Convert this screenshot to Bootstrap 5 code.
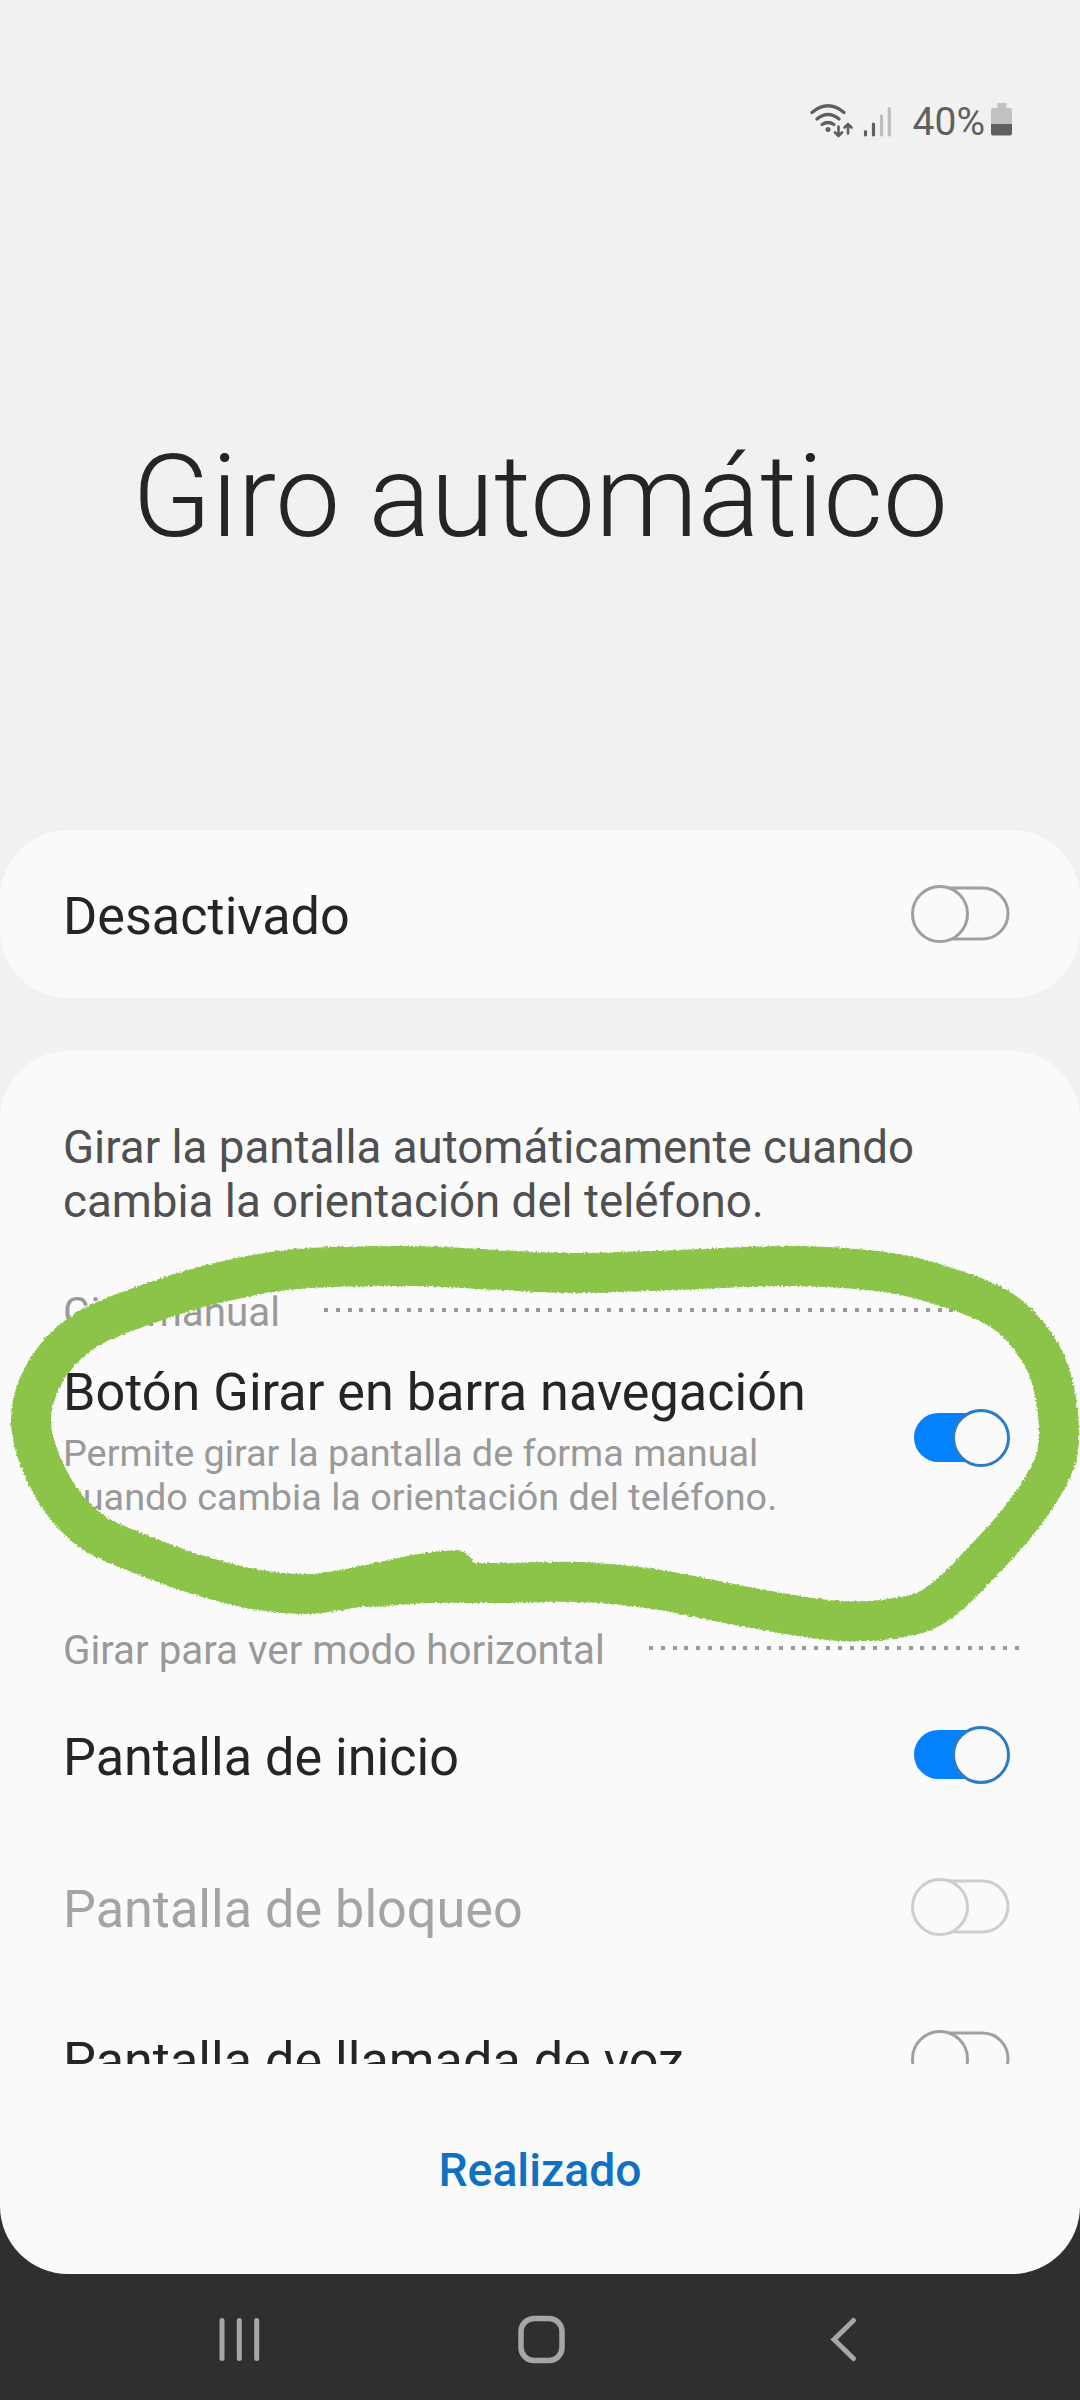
<!DOCTYPE html>
<html lang="es">
<head>
<meta charset="utf-8">
<meta name="viewport" content="width=device-width, initial-scale=1">
<title>Giro automático</title>
<link href="https://cdn.jsdelivr.net/npm/bootstrap@5.3.0/dist/css/bootstrap.min.css" rel="stylesheet">
<style>
  body { font-family: Roboto, "Noto Sans", sans-serif; background: #2f2f2f; color: #252525; }
  .phone { width: 1080px; height: 2400px; }
  .screen { height: 2274px; background: linear-gradient(#f1f1f1 0 1500px, #2f2f2f 1500px); }
  .dark-base { background: #2f2f2f; }
  .hero { height: 830px; }
  .status { height: 150px; padding: 90px 67px 0 0; color: #5f5f5f; }
  .pct { font-size: 39px; line-height: 60px; padding-top: 2px; margin-left: 13px; margin-right: 6px; }
  .hero-title { font-size: 115.8px; font-weight: 300; line-height: 140px; margin-top: 277px; }
  .panel { background: #fafafa; border-radius: 68px; }
  .panel-top { height: 168px; margin-bottom: 53px; }
  .panel-main { height: 1223px; }
  .side { padding-left: 63px; padding-right: 70px; }
  .scroller { height: 1013px; padding-top: 70px; }
  .intro { font-size: 45.7px; line-height: 54px; color: #505050; margin-bottom: 50px; }
  .sect { height: 62px; font-size: 40.3px; color: #999; padding-right: 60px; }
  .sect span { line-height: 46px; padding-top: 5px; }
  .dots { height: 4px; margin-left: 44px; background: repeating-linear-gradient(90deg, #999 0 4px, transparent 4px 11.8px); }
  .opt { height: 152px; }
  .opt-tall { height: 194px; margin-bottom: 82px; }
  .opt-name { font-size: 52.2px; line-height: 60px; padding-top: 6px; }
  .opt-tall .opt-name { padding-top: 6px; }
  .opt-note { font-size: 37.8px; line-height: 44px; color: #999; margin-top: 8px; }
  .off-text { color: #a4a4a4; }
  .foot { height: 210px; }
  .done { font-size: 46.3px; line-height: 60px; font-weight: 500; color: #0f71c0; margin-top: 1px; }
  .done:hover { color: #0f71c0; }
  .navkeys { height: 126px; }
  .ring { left: 0; top: 1230px; pointer-events: none; }
  svg { display: block; flex: none; }
</style>
<script src="https://cdn.jsdelivr.net/npm/bootstrap@5.3.0/dist/js/bootstrap.bundle.min.js"></script>
</head>
<body>
<svg width="0" height="0" class="position-absolute" aria-hidden="true">
  <symbol id="sw-off" viewBox="0 0 100 60">
    <path d="M30 4H72.500A25.500 25.500 0 0 1 72.500 55H30" fill="none" stroke="currentColor" stroke-width="3"/>
    <circle cx="30" cy="30" r="27.500" fill="#fafafa" stroke="currentColor" stroke-width="3"/>
  </symbol>
  <symbol id="sw-on" viewBox="0 0 100 60">
    <rect x="4" y="5" width="90" height="49" rx="24.500" fill="#0381fe"/>
    <circle cx="71" cy="30" r="27.500" fill="#fafafa" stroke="#2a7cc4" stroke-width="3"/>
  </symbol>
</svg>
<div class="phone position-relative overflow-hidden">
  <main class="dark-base">
    <div class="screen d-flex flex-column">
      <header class="hero">
        <div class="status d-flex justify-content-end align-items-start">
          <svg width="90" height="60" viewBox="0 0 90 60" fill="none" stroke="#5f5f5f" stroke-linecap="round">
            <path d="M2 22.500Q18 9 34 22.500M7 29Q18 20 29 29" stroke-width="3.200"/>
            <path d="M12 34.500Q18 30.500 24 34.500" stroke-width="3.200"/>
            <circle cx="18" cy="39.500" r="2.500" fill="#5f5f5f" stroke="none"/>
            <path d="M28.500 36.500V46M25 42.500L28.500 46L32 42.500M38 43.500V34M34.500 37.500L38 34L41.500 37.500" stroke-width="2.600"/>
            <path d="M55.500 41.500V45M63.500 34V45" stroke-width="3.200"/>
            <path d="M71.500 26V45M79.300 18.500V45" stroke="#bdbdbd" stroke-width="3.200"/>
          </svg>
          <span class="pct">40%</span>
          <svg width="22" height="60" viewBox="0 0 22 60">
            <path d="M6.500 13h9v5H19q2 0 2 2v14H0V20q0-2 2-2h4.500z" fill="#c1c1c1"/>
            <path d="M0 34h21v9.500q0 2-2 2H2q-2 0-2-2z" fill="#5f5f5f"/>
          </svg>
        </div>
        <h1 class="hero-title text-center mb-0">Giro automático</h1>
      </header>

      <section class="panel panel-top side d-flex justify-content-between align-items-center">
        <span class="opt-name">Desactivado</span>
        <svg width="100" height="60" color="#a0a0a0"><use href="#sw-off"/></svg>
      </section>

      <section class="panel panel-main">
        <div class="scroller overflow-hidden">
          <p class="intro side">Girar la pantalla automáticamente cuando<br>cambia la orientación del teléfono.</p>
          <div class="sect side d-flex align-items-center"><span>Giro manual</span><div class="dots flex-grow-1"></div></div>
          <div class="opt-tall side d-flex justify-content-between align-items-center">
            <div>
              <div class="opt-name">Botón Girar en barra navegación</div>
              <div class="opt-note">Permite girar la pantalla de forma manual<br>cuando cambia la orientación del teléfono.</div>
            </div>
            <svg width="100" height="60"><use href="#sw-on"/></svg>
          </div>
          <div class="sect side d-flex align-items-center"><span>Girar para ver modo horizontal</span><div class="dots flex-grow-1"></div></div>
          <div class="opt side d-flex justify-content-between align-items-center">
            <span class="opt-name">Pantalla de inicio</span>
            <svg width="100" height="60"><use href="#sw-on"/></svg>
          </div>
          <div class="opt side d-flex justify-content-between align-items-center">
            <span class="opt-name off-text">Pantalla de bloqueo</span>
            <svg width="100" height="60" color="#cdcdcd"><use href="#sw-off"/></svg>
          </div>
          <div class="opt side d-flex justify-content-between align-items-center">
            <span class="opt-name">Pantalla de llamada de voz</span>
            <svg width="100" height="60" color="#a0a0a0"><use href="#sw-off"/></svg>
          </div>
        </div>
        <div class="foot d-flex justify-content-center align-items-center">
          <button class="btn border-0 p-0 done" type="button">Realizado</button>
        </div>
      </section>
    </div>
  </main>

  <nav class="navkeys dark-base">
    <svg width="1080" height="126" viewBox="0 0 1080 126" fill="none" stroke="#a6a6a6" stroke-linecap="round">
      <path d="M222 46.500V84.500M239.300 46.500V84.500M256.700 46.500V84.500" stroke-width="5"/>
      <rect x="521" y="44.500" width="41" height="42" rx="13" stroke-width="5.500"/>
      <path d="M853.500 46.500L834 65.500L853.500 84.500" stroke-width="5"/>
    </svg>
  </nav>

  <!-- hand-drawn marker ring -->
  <svg class="ring position-absolute" width="1080" height="420" viewBox="0 1230 1080 420">
    <filter id="chalk" filterUnits="userSpaceOnUse" x="0" y="1230" width="1080" height="420">
      <feTurbulence type="fractalNoise" baseFrequency="0.5" numOctaves="2" seed="4"/>
      <feDisplacementMap in="SourceGraphic" scale="4" xChannelSelector="R" yChannelSelector="G"/>
    </filter>
    <path id="marker" fill="none" stroke="#8bc44a" stroke-width="40" stroke-linecap="round" stroke-linejoin="round" filter="url(#chalk)"/>
  </svg>
</div>
<script>
  // smooth curve through the sampled marker points
  const pts = [[455,1570],[420,1574],[372,1584],[310,1594],[248,1588],[189,1572],[138,1553],[94,1533],[64,1504],[41,1463],
    [31,1423],[38,1387],[59,1353],[93,1326],[148,1304],[213,1284],[296,1269],[413,1266],[499,1270],[574,1273],[678,1270],
    [788,1266],[884,1272],[946,1287],[998,1308],[1029,1336],[1050,1374],[1059,1427],[1053,1467],[1022,1517],[981,1563],
    [946,1597],[912,1615],[840,1621],[747,1607],[660,1590],[581,1582],[505,1583],[430,1583],[372,1587]];
  let d = `M${pts[0]}`;
  for (let i = 0; i < pts.length - 1; i++) {
    const a = pts[i - 1] || pts[i], b = pts[i], c = pts[i + 1], e = pts[i + 2] || c;
    d += `C${b[0] + (c[0] - a[0]) / 6} ${b[1] + (c[1] - a[1]) / 6} ${c[0] - (e[0] - b[0]) / 6} ${c[1] - (e[1] - b[1]) / 6} ${c[0]} ${c[1]}`;
  }
  document.getElementById('marker').setAttribute('d', d);
</script>
</body>
</html>
